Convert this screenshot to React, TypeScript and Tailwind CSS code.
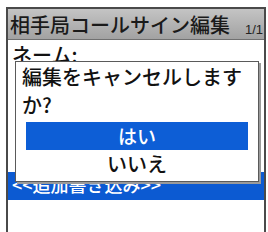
import React from "react";

const jp = { fontFamily: '"Noto Sans CJK JP", "Noto Sans", sans-serif' };

export default function App() {
  return (
    <div className="relative w-[268px] h-[232px] bg-white overflow-hidden" style={jp}>
      <div className="ml-[6px] mt-[7px] w-[260px] h-[225px] border-l-2 border-t-2 border-r-2 border-[#4a4a4a] flex flex-col">
        <div className="h-[31px] shrink-0 flex items-end justify-between bg-gradient-to-b from-[#c4c4c4] to-[#a2a2a2] border-b border-[#707070] pl-[2px] pr-[1px] overflow-hidden">
          <span className="text-[20px] leading-[28px] font-medium text-[#1a1a1a] whitespace-nowrap">相手局コールサイン編集</span>
          <span className="text-[13px] leading-[14px] mb-[2px] text-[#222]" style={{ fontFamily: '"Liberation Sans", sans-serif' }}>1/1</span>
        </div>
        <div className="h-[26px] shrink-0 overflow-hidden text-[20px] leading-[26px] font-medium text-[#111] pl-[4px] mt-[2px]">ネーム:</div>
        <div className="h-[104px] shrink-0" />
        <div className="h-[28px] shrink-0 overflow-hidden bg-[#0c5ad2] text-white text-[18px] leading-[24px] font-medium pl-[4px] whitespace-nowrap">&lt;&lt;追加書き込み&gt;&gt;</div>
        <div className="flex-1" />
      </div>

      <div className="absolute left-[15px] top-[61px] w-[244px] h-[121px] bg-white border border-[#5a5a5a] shadow-[2px_2px_0_#9a9a9a] flex flex-col px-[10px]">
        <div className="h-[28px] shrink-0 text-[20px] leading-[28px] font-medium text-[#111] mt-[1px] -ml-[4px] whitespace-nowrap">編集をキャンセルします</div>
        <div className="h-[28px] shrink-0 text-[20px] leading-[28px] font-medium text-[#111] -ml-[4px]">か?</div>
        <div className="h-[28px] shrink-0 mt-[3px] bg-[#0d5ed6] text-white text-[19px] leading-[28px] font-medium text-center">はい</div>
        <div className="h-[28px] shrink-0 text-[20px] leading-[28px] font-medium text-[#111] text-center">いいえ</div>
      </div>
    </div>
  );
}
